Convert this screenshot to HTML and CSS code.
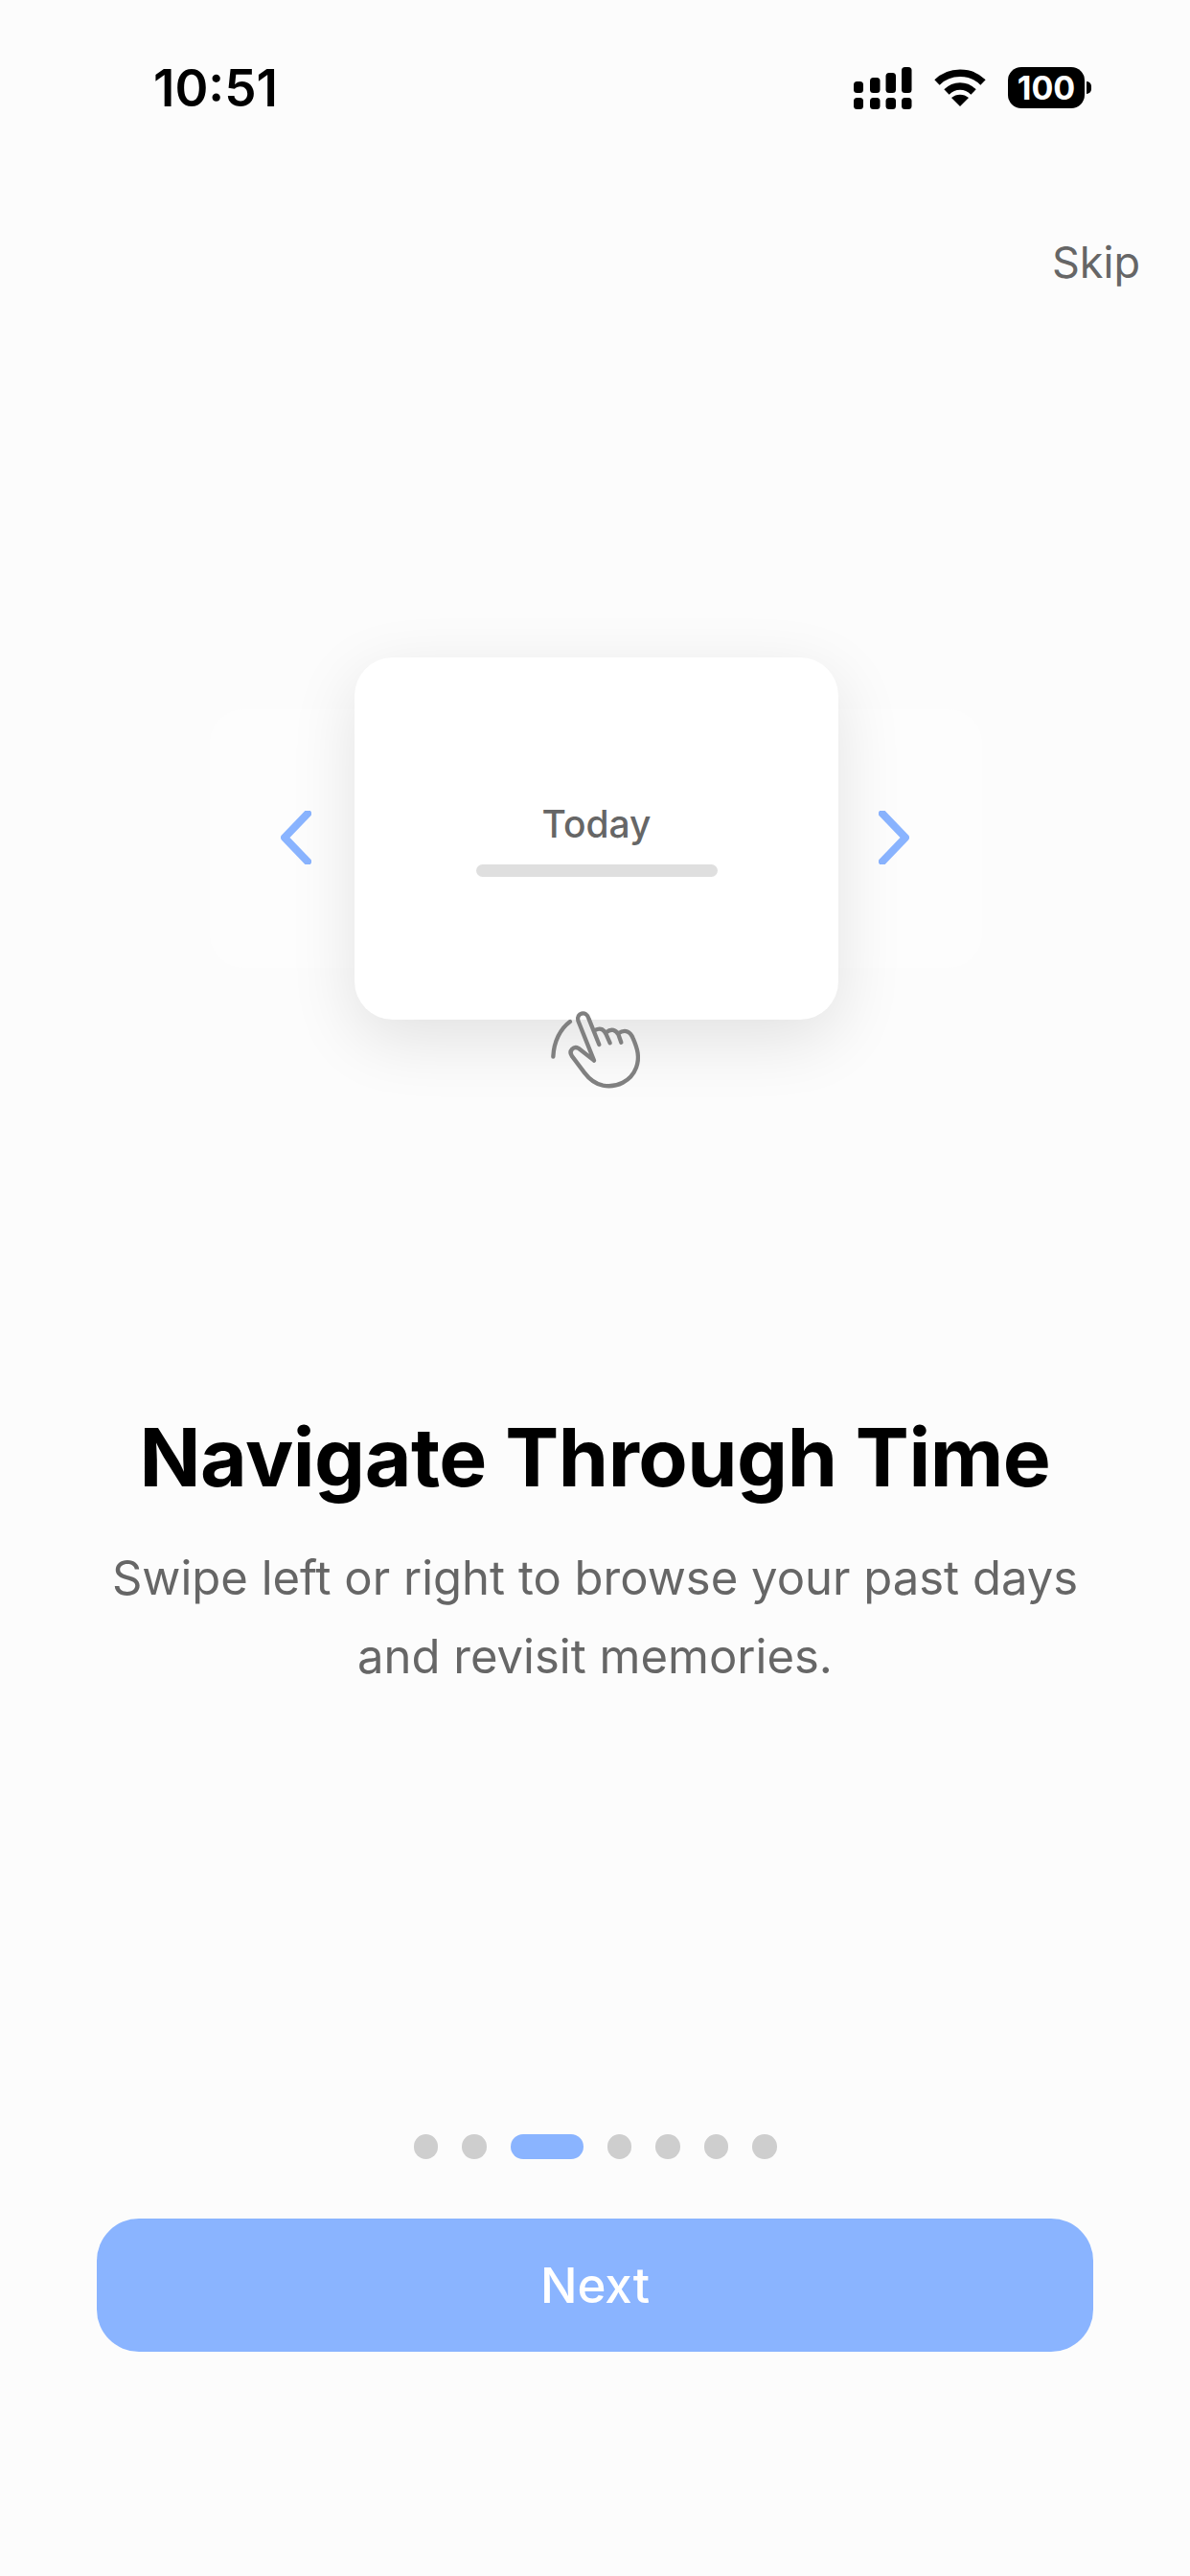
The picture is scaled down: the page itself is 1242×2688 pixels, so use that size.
FILE: index.html
```html
<!DOCTYPE html>
<html lang="en">
<head>
    <meta charset="UTF-8">
    <title>Navigate Through Time</title>
    <link rel="stylesheet" href="styles.css">
</head>
<body>
    <div class="status-bar">
        <span class="clock">10:51</span>
        <div class="status-icons">
            <svg class="signal" width="61" height="44" viewBox="0 0 61 44">
                <rect x="0" y="15" width="10" height="12" rx="3.5"/>
                <rect x="17" y="11" width="10.500" height="16" rx="3.500"/>
                <rect x="33.500" y="6" width="10.500" height="21" rx="3.500"/>
                <rect x="50" y="0" width="10.500" height="27" rx="3.500"/>
                <rect x="0" y="32" width="10" height="12" rx="3.500"/>
                <rect x="17" y="32" width="10.500" height="12" rx="3.500"/>
                <rect x="33.500" y="32" width="10.500" height="12" rx="3.500"/>
                <rect x="50" y="32" width="10.500" height="12" rx="3.500"/>
            </svg>
            <svg class="wifi" width="54" height="40" viewBox="0 0 54 40">
                <path d="M3 14 C16 1 38 1 51 14" fill="none" stroke="#000" stroke-width="7.500"/>
                <path d="M13 24 C21 16 33 16 41 24" fill="none" stroke="#000" stroke-width="7.500"/>
                <path d="M18 30 C23 25.500 31 25.500 36 30 L27 39 Z"/>
            </svg>
            <div class="battery">
                <span class="battery-body">100</span>
                <span class="battery-tip"></span>
            </div>
        </div>
    </div>

    <div class="skip-row"><span class="skip">Skip</span></div>

    <div class="stage">
        <div class="side-card side-left"></div>
        <div class="side-card side-right"></div>
        <svg class="chevron chevron-left" width="32" height="56" viewBox="0 0 32 56">
            <path d="M28 3 L4 28 L28 53"/>
        </svg>
        <svg class="chevron chevron-right" width="32" height="56" viewBox="0 0 32 56">
            <path d="M4 3 L28 28 L4 53"/>
        </svg>
        <div class="day-card">
            <span class="day-label">Today</span>
            <span class="day-bar"></span>
        </div>
        <svg class="hand" width="160" height="150" viewBox="0 0 480 450">
            <path d="M165 138 C135 160 114 200 112 248"/>
            <path d="M240 260 L190 135 C184 112 215 100 224 130 L256 210 M243 165 C262 155 272 165 278 178 L290 205 M278 172 C295 158 308 165 316 178 L325 203 M316 175 C338 160 354 170 362 190 C376 222 384 250 372 282 C356 325 310 346 268 338 C240 332 225 318 210 298 L170 245 C160 230 176 212 192 222 L240 260"/>
        </svg>
    </div>

    <div class="copy">
        <h1 class="title">Navigate Through Time</h1>
        <p class="subtitle">Swipe left or right to browse your past days<br>and revisit memories.</p>
    </div>

    <div class="dots">
        <span class="dot"></span>
        <span class="dot"></span>
        <span class="dot active"></span>
        <span class="dot"></span>
        <span class="dot"></span>
        <span class="dot"></span>
        <span class="dot"></span>
    </div>

    <button class="next-btn">Next</button>
</body>
</html>
```

FILE: styles.css
```css
:root {
    --bg: #fcfcfc;
    --accent: #8ab4ff;
    --text: #666666;
    --dot: #cecece;
}

* { box-sizing: border-box; margin: 0; padding: 0; }

body {
    width: 1242px;
    height: 2688px;
    overflow: hidden;
    font-family: "Inter", sans-serif;
    background: var(--bg);
    color: var(--text);
    display: flex;
    flex-direction: column;
}

.status-bar {
    height: 184px;
    flex-shrink: 0;
    padding: 62px 103px 0 160px;
    display: flex;
    justify-content: space-between;
    align-items: flex-start;
}

.clock {
    font-size: 53px;
    line-height: 60px;
    font-weight: 600;
    color: #000;
}

.status-icons {
    display: flex;
    align-items: flex-start;
    padding-top: 8px;
    gap: 23px;
}

.signal { margin-top: 0; }
.wifi { margin-top: 2px; }

.battery {
    display: flex;
    align-items: center;
    gap: 2px;
}

.battery-body {
    width: 80px;
    height: 43px;
    background: #000;
    border-radius: 14px;
    color: #fff;
    font-size: 34px;
    font-weight: 700;
    line-height: 43px;
    text-align: center;
}

.battery-tip {
    width: 5px;
    height: 13px;
    background: #000;
    border-radius: 0 7px 7px 0;
}

.skip-row {
    height: 137px;
    flex-shrink: 0;
    padding: 47px 52px 0 0;
    display: flex;
    justify-content: flex-end;
    align-items: flex-start;
}

.skip {
    font-size: 45px;
    line-height: 86px;
    color: var(--text);
}

/* illustration, layers sit on top of each other */
.stage {
    position: relative;
    height: 1150px;
    flex-shrink: 0;
    padding: 365px 0 0 3px;
    display: flex;
    justify-content: center;
    align-items: flex-start;
}

.day-card {
    position: relative;
    width: 505px;
    height: 378px;
    background: #fff;
    border-radius: 40px;
    box-shadow: 0 20px 70px rgba(0, 0, 0, 0.11);
    display: flex;
    flex-direction: column;
    align-items: center;
    padding-top: 152px;
    gap: 20px;
}

.day-label {
    font-size: 39px;
    line-height: 44px;
    font-weight: 500;
    color: var(--text);
}

.day-bar {
    width: 252px;
    height: 13px;
    border-radius: 7px;
    background: #dfdfdf;
}

.side-card {
    position: absolute;
    top: 419px;
    width: 280px;
    height: 270px;
    background: #fdfdfd;
    border-radius: 36px;
}

.side-left { left: 219px; }
.side-right { left: 745px; }

.chevron {
    position: absolute;
    top: 525px;
    fill: none;
    stroke: var(--accent);
    stroke-width: 8;
    stroke-linecap: round;
    stroke-linejoin: round;
}

.chevron-left { left: 293px; }
.chevron-right { left: 917px; }

.hand {
    position: absolute;
    left: 540px;
    top: 699px;
    fill: none;
    stroke: #808080;
    stroke-width: 13;
    stroke-linecap: round;
    stroke-linejoin: round;
}

.copy {
    height: 756px;
    flex-shrink: 0;
    text-align: center;
}

.title {
    font-size: 84px;
    line-height: 100px;
    font-weight: 700;
    letter-spacing: -0.5px;
    color: #000;
}

.subtitle {
    margin-top: 35px;
    font-size: 49px;
    line-height: 82px;
    font-weight: 400;
    color: var(--text);
}

.dots {
    height: 26px;
    flex-shrink: 0;
    display: flex;
    justify-content: center;
    gap: 25px;
}

.dot {
    width: 25.500px;
    height: 25.500px;
    border-radius: 50%;
    background: var(--dot);
}

.dot.active {
    width: 76px;
    border-radius: 13px;
    background: var(--accent);
}

.next-btn {
    width: 1040px;
    height: 139px;
    flex-shrink: 0;
    margin: 62px 0 0 101px;
    border: none;
    border-radius: 44px;
    background: var(--accent);
    color: #fff;
    font-family: "Inter", sans-serif;
    font-size: 51px;
    font-weight: 500;
}
```
